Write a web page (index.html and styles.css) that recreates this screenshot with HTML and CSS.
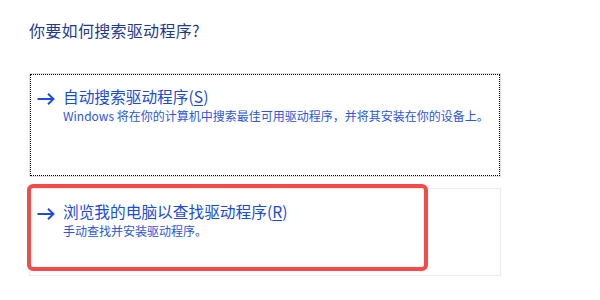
FILE: index.html
```html
<!DOCTYPE html>
<html lang="zh-CN">
<head>
<meta charset="utf-8">
<link rel="stylesheet" href="styles.css">
</head>
<body>
<div class="page">
  <h1 class="heading">你要如何搜索驱动程序?</h1>
  <div class="options">
    <div class="option option-focused">
      <div class="focus-ring">
        <svg class="arrow" width="18" height="12" viewBox="0 0 18 12"><path d="M0.5 6H16.5M11 0.8L16.5 6L11 11.2" fill="none" stroke="#1a4bdc" stroke-width="1.9"/></svg>
        <div class="texts">
          <div class="opt-title">自动搜索驱动程序(<u>S</u>)</div>
          <div class="opt-desc">Windows 将在你的计算机中搜索最佳可用驱动程序，并将其安装在你的设备上。</div>
        </div>
      </div>
    </div>
    <div class="option option-second">
      <div class="plain">
        <svg class="arrow" width="18" height="12" viewBox="0 0 18 12"><path d="M0.5 6H16.5M11 0.8L16.5 6L11 11.2" fill="none" stroke="#1a4bdc" stroke-width="1.9"/></svg>
        <div class="texts">
          <div class="opt-title">浏览我的电脑以查找驱动程序(<u>R</u>)</div>
          <div class="opt-desc">手动查找并安装驱动程序。</div>
        </div>
      </div>
      <div class="highlight"></div>
    </div>
  </div>
</div>
</body>
</html>
```
FILE: styles.css
```css
html, body {
  margin: 0;
  padding: 0;
  background: #ffffff;
  width: 600px;
  height: 300px;
  overflow: hidden;
}
body {
  font-family: "Noto Sans CJK SC", "Noto Sans", sans-serif;
}
.page {
  padding: 19px 0 0 29px;
}
.heading {
  margin: 0;
  font-size: 16px;
  font-weight: normal;
  line-height: 22px;
  color: #1d3a93;
  letter-spacing: 0.3px;
}
.options {
  margin-top: 32px;
  width: 472px;
  display: flex;
  flex-direction: column;
  gap: 11px;
}
.option {
  position: relative;
  border: 1px solid #e1e1e1;
  box-sizing: border-box;
}
.option-focused {
  height: 104px;
}
.option-second {
  height: 88px;
  border-color: #ececec;
}
.focus-ring {
  height: 100%;
  box-sizing: border-box;
  border: 1px dotted #000;
  display: flex;
  align-items: flex-start;
  padding: 12px 0 0 6px;
}
.plain {
  display: flex;
  align-items: flex-start;
  padding: 13px 0 0 7px;
}
.arrow {
  flex: none;
  margin-top: 6px;
  margin-right: 8px;
}
.texts {
  display: flex;
  flex-direction: column;
}
.opt-title {
  font-size: 15.7px;
  line-height: 20px;
  color: #1a4bdc;
}
.opt-title u {
  text-underline-offset: 2px;
}
.opt-desc {
  font-size: 12px;
  line-height: 16px;
  margin-top: 1px;
  color: #2a55e6;
}
.highlight {
  position: absolute;
  left: -3px;
  top: -5px;
  width: 401px;
  height: 87px;
  box-sizing: border-box;
  border: 4px solid #f44b48;
  border-radius: 6px;
}
```
